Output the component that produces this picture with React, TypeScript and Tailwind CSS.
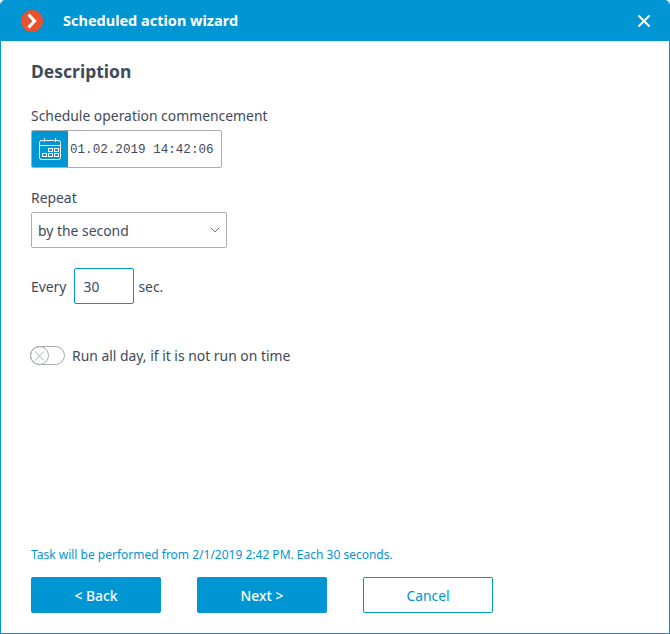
import { ChevronDown, X } from "lucide-react";

function CalendarIcon() {
  return (
    <svg width="22" height="22" viewBox="0 0 22 22" fill="none" stroke="white" strokeWidth="1">
      <rect x="0.5" y="2.5" width="21" height="19" rx="2" />
      <path d="M0.5 7.5h21M5.5 0v4M16.5 0v4" />
      <rect x="9.5" y="10.5" width="4" height="3" />
      <rect x="15.5" y="10.5" width="4" height="3" />
      <rect x="3.5" y="15.5" width="4" height="3" />
      <rect x="9.5" y="15.5" width="4" height="3" />
      <rect x="15.5" y="15.5" width="4" height="3" />
    </svg>
  );
}

function Logo() {
  return (
    <span className="flex h-[22px] w-[22px] items-center justify-center rounded-full bg-[#e9512f]">
      <svg width="12" height="16" viewBox="0 0 12 16" fill="none" stroke="white" strokeWidth="3.2">
        <path d="M2.5 1.5l6 6.5-6 6.5" />
      </svg>
    </span>
  );
}

export default function App() {
  return (
    <div className="flex h-[634px] w-[670px] flex-col overflow-hidden rounded-t-[5px] border border-t-0 border-[#0095d3] bg-white font-['Noto_Sans',sans-serif] text-[13.9px] text-[#3f4a5a]">
      <div className="flex h-[41px] shrink-0 items-center bg-[#0095d3] pl-5 pr-[15px] text-white">
        <Logo />
        <span className="ml-[20px] text-[14.5px] font-bold">Scheduled action wizard</span>
        <X size={20} strokeWidth={2.4} className="ml-auto" />
      </div>

      <div className="flex flex-1 flex-col px-[30px]">
        <h1 className="mt-[18px] text-[17.5px] font-bold leading-[25px]">Description</h1>

        <label className="mt-[22px] leading-[20px]">Schedule operation commencement</label>
        <div className="mt-[4px] flex h-[38px] w-[191px] items-center overflow-hidden rounded-[2px] border border-[#a9acb0]">
          <span className="flex h-full w-[36px] items-center justify-center bg-[#0095d3]">
            <CalendarIcon />
          </span>
          <span className="ml-[2px] pt-[2px] font-['Liberation_Mono',monospace] text-[12.6px]">01.02.2019 14:42:06</span>
        </div>

        <label className="mt-[20px] leading-[20px]">Repeat</label>
        <div className="mt-[4px] flex h-[36px] w-[196px] items-center justify-between rounded-[2px] border border-[#a9acb0] pl-[6px] pr-[3px]">
          <span className="pt-[2px]">by the second</span>
          <ChevronDown size={16} strokeWidth={1.5} className="text-[#6b7480]" />
        </div>

        <div className="mt-[20px] flex items-center">
          <span className="pt-[2px]">Every</span>
          <span className="ml-[8px] flex h-[36px] w-[60px] items-center rounded-[2px] border border-[#0095d3] pl-[8px] pt-[2px]">30</span>
          <span className="ml-[4px] pt-[2px]">sec.</span>
        </div>

        <div className="-ml-px mt-[41px] flex items-center">
          <span className="flex h-[19px] w-[35px] items-center rounded-full border border-[#a9acb0]">
            <span className="-ml-px flex h-[19px] w-[19px] items-center justify-center rounded-full border border-[#a9acb0]">
              <X size={18} strokeWidth={1} className="text-[#8a9099]" />
            </span>
          </span>
          <span className="ml-[7px] pt-px">Run all day, if it is not run on time</span>
        </div>

        <p className="mt-auto text-[12px] leading-[16px] text-[#0095d3]">Task will be performed from 2/1/2019 2:42 PM. Each 30 seconds.</p>
        <div className="mb-[20px] mt-[14px] flex gap-[36px]">
          <button type="button" className="h-[36px] w-[130px] rounded-[2px] bg-[#0095d3] pt-[2px] font-medium text-white">&lt; Back</button>
          <button type="button" className="h-[36px] w-[130px] rounded-[2px] bg-[#0095d3] pt-[2px] font-medium text-white">Next &gt;</button>
          <button type="button" className="h-[36px] w-[130px] rounded-[2px] border border-[#0095d3] pt-[2px] text-[#0095d3]">Cancel</button>
        </div>
      </div>
    </div>
  );
}
